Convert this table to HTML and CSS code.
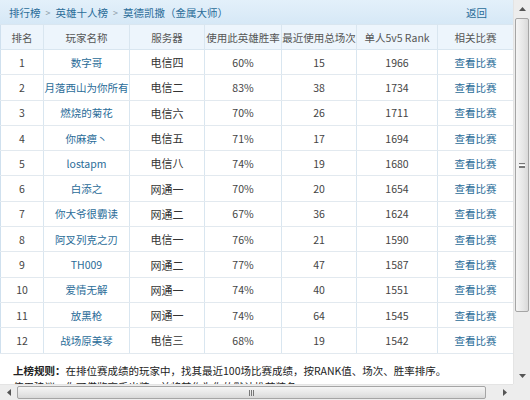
FILE: index.html
```html
<!DOCTYPE html>
<html lang="zh-CN">
<head>
<meta charset="utf-8">
<title>排行榜</title>
<link rel="stylesheet" href="styles.css">
</head>
<body>
<div class="window">
  <div class="viewport">
    <div class="crumbs">
      <div class="trail">
        <a class="lnk">排行榜</a><span class="sep">&gt;</span><a class="lnk">英雄十人榜</a><span class="sep">&gt;</span><span class="lnk">莫德凯撒（金属大师）</span>
      </div>
      <a class="lnk back">返回</a>
    </div>
    <table class="rank">
      <colgroup>
        <col class="c1"><col class="c2"><col class="c3"><col class="c4"><col class="c5"><col class="c6"><col class="c7">
      </colgroup>
      <thead>
        <tr><th>排名</th><th>玩家名称</th><th>服务器</th><th>使用此英雄胜率</th><th>最近使用总场次</th><th>单人5v5 Rank</th><th>相关比赛</th></tr>
      </thead>
      <tbody>
        <tr><td>1</td><td class="lnk">数字哥</td><td class="srv">电信四</td><td>60%</td><td>15</td><td>1966</td><td class="lnk">查看比赛</td></tr>
        <tr><td>2</td><td class="lnk">月落西山为你所有</td><td class="srv">电信二</td><td>83%</td><td>38</td><td>1734</td><td class="lnk">查看比赛</td></tr>
        <tr><td>3</td><td class="lnk">燃烧的菊花</td><td class="srv">电信六</td><td>70%</td><td>26</td><td>1711</td><td class="lnk">查看比赛</td></tr>
        <tr><td>4</td><td class="lnk">你麻痹丶</td><td class="srv">电信五</td><td>71%</td><td>17</td><td>1694</td><td class="lnk">查看比赛</td></tr>
        <tr><td>5</td><td class="lnk">lostapm</td><td class="srv">电信八</td><td>74%</td><td>19</td><td>1680</td><td class="lnk">查看比赛</td></tr>
        <tr><td>6</td><td class="lnk">白添之</td><td class="srv">网通一</td><td>70%</td><td>20</td><td>1654</td><td class="lnk">查看比赛</td></tr>
        <tr><td>7</td><td class="lnk">你大爷很霸读</td><td class="srv">网通二</td><td>67%</td><td>36</td><td>1624</td><td class="lnk">查看比赛</td></tr>
        <tr><td>8</td><td class="lnk">阿叉列克之刃</td><td class="srv">电信一</td><td>76%</td><td>21</td><td>1590</td><td class="lnk">查看比赛</td></tr>
        <tr><td>9</td><td class="lnk">TH009</td><td class="srv">网通二</td><td>77%</td><td>47</td><td>1587</td><td class="lnk">查看比赛</td></tr>
        <tr><td>10</td><td class="lnk">爱情无解</td><td class="srv">网通一</td><td>74%</td><td>40</td><td>1551</td><td class="lnk">查看比赛</td></tr>
        <tr><td>11</td><td class="lnk">放黑枪</td><td class="srv">网通一</td><td>74%</td><td>64</td><td>1545</td><td class="lnk">查看比赛</td></tr>
        <tr><td>12</td><td class="lnk">战场原美琴</td><td class="srv">电信三</td><td>68%</td><td>19</td><td>1542</td><td class="lnk">查看比赛</td></tr>
      </tbody>
    </table>
    <div class="notes">
      <p><b>上榜规则：</b>在排位赛成绩的玩家中，找其最近100场比赛成绩，按RANK值、场次、胜率排序。</p>
      <p>使用建议：你可借鉴高手出装，并将其作为你的默认推荐装备。</p>
    </div>
  </div>
  <div class="vbar">
    <div class="arrow">
      <svg width="7" height="4" viewBox="0 0 7 4"><path d="M0 4 L3.5 0 L7 4 Z" fill="#555"/></svg>
    </div>
    <div class="vtrack"><div class="vthumb"><div class="vgrip"></div></div></div>
    <div class="arrow">
      <svg width="7" height="4" viewBox="0 0 7 4"><path d="M0 0 L3.5 4 L7 0 Z" fill="#555"/></svg>
    </div>
  </div>
  <div class="hbar">
    <div class="harrow">
      <svg width="4" height="7" viewBox="0 0 4 7"><path d="M4 0 L0 3.5 L4 7 Z" fill="#555"/></svg>
    </div>
    <div class="htrack"><div class="hthumb"><div class="hgrip"></div></div></div>
    <div class="harrow">
      <svg width="4" height="7" viewBox="0 0 4 7"><path d="M0 0 L4 3.5 L0 7 Z" fill="#555"/></svg>
    </div>
  </div>
  <div class="corner"></div>
</div>
</body>
</html>
```

FILE: styles.css
```css
* { box-sizing: border-box; }
html, body { margin: 0; padding: 0; }
body {
  font-family: "Noto Sans CJK SC", "Noto Sans", sans-serif;
  font-size: 10.5px;
  color: #333;
  background: #fff;
}
.window {
  width: 530px;
  height: 400px;
  display: grid;
  grid-template-columns: 513px 17px;
  grid-template-rows: 384px 16px;
  overflow: hidden;
}
.viewport {
  overflow: hidden;
  background: #fff;
}
.crumbs {
  height: 24px;
  display: flex;
  align-items: center;
  justify-content: space-between;
  padding: 0 26px 0 9px;
  background: linear-gradient(#e3f0fa, #d6e8f6);
}
.trail { display: flex; align-items: center; }
.lnk { color: #2a6c98; text-decoration: none; }
.sep { color: #8a9aa6; margin: 0 5px; font-size: 9px; }
.rank {
  width: 513px;
  border-collapse: collapse;
  table-layout: fixed;
}
.c1 { width: 43px; } .c2 { width: 86px; } .c3 { width: 75px; }
.c4 { width: 77px; } .c5 { width: 75px; } .c6 { width: 81px; } .c7 { width: 76px; }
.rank th {
  height: 25px;
  background: #edf5fc;
  font-weight: normal;
  color: #555;
  border: 1px solid #d9e6f0;
  padding: 0;
  text-align: center;
}
.rank td {
  height: 25.3px;
  border: 1px solid #e2e9ef;
  border-left-color: #d9e6f0;
  border-right-color: #d9e6f0;
  padding: 0;
  text-align: center;
  color: #444;
}
.rank td.lnk { color: #2a6c98; }
.rank td.srv { color: #333; font-size: 11px; }
.rank tr > :first-child { border-left-color: #cfe0ee; }
.notes {
  padding: 9px 13px 0;
  color: #222;
}
.notes p { margin: 0; line-height: 16px; white-space: nowrap; }
.notes b { font-weight: bold; }

.vbar {
  display: flex;
  flex-direction: column;
  background: #ededed;
  border-left: 1px solid #e4e4e4;
}
.arrow {
  height: 17px;
  flex: none;
  display: flex;
  align-items: center;
  justify-content: center;
}
.vtrack { flex: 1; display: flex; flex-direction: column; }
.vthumb {
  margin: 1px 1px 0 1px;
  height: 294px;
  border: 1px solid #a5a5a5;
  border-radius: 2px;
  background: linear-gradient(90deg, #f5f5f5, #e6e6e6 60%, #d9d9d9);
  display: flex;
  align-items: center;
  justify-content: center;
}
.vgrip {
  width: 6px;
  height: 5px;
  border-top: 1px solid #777;
  border-bottom: 1px solid #777;
  position: relative;
  background: linear-gradient(#fff 0 1px, #777 1px 2px, transparent 2px);
  background-position: 0 1px;
  background-repeat: no-repeat;
}
.hbar {
  display: flex;
  background: #ededed;
  border-top: 1px solid #e4e4e4;
}
.harrow {
  width: 17px;
  flex: none;
  display: flex;
  align-items: center;
  justify-content: center;
}
.htrack { flex: 1; display: flex; }
.hthumb {
  width: 469px;
  margin: 1px 0;
  border: 1px solid #a5a5a5;
  border-radius: 2px;
  background: linear-gradient(#f5f5f5, #e6e6e6 60%, #d9d9d9);
  display: flex;
  align-items: center;
  justify-content: center;
}
.hgrip {
  width: 5px;
  height: 6px;
  border-left: 1px solid #777;
  border-right: 1px solid #777;
  background: linear-gradient(90deg, transparent 1px, #777 1px 2px, transparent 2px);
}
.corner { background: #ededed; }
```
